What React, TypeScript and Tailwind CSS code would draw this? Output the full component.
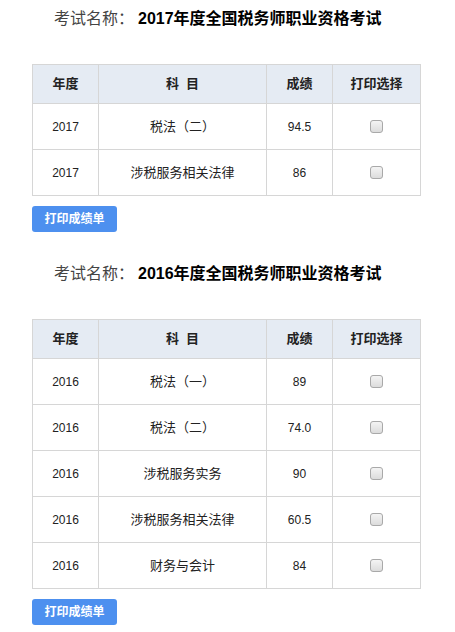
const exams = [
  {
    name: '2017年度全国税务师职业资格考试',
    rows: [
      { year: '2017', subject: '税法（二）', score: '94.5' },
      { year: '2017', subject: '涉税服务相关法律', score: '86' },
    ],
  },
  {
    name: '2016年度全国税务师职业资格考试',
    rows: [
      { year: '2016', subject: '税法（一）', score: '89' },
      { year: '2016', subject: '税法（二）', score: '74.0' },
      { year: '2016', subject: '涉税服务实务', score: '90' },
      { year: '2016', subject: '涉税服务相关法律', score: '60.5' },
      { year: '2016', subject: '财务与会计', score: '84' },
    ],
  },
]

function Checkbox() {
  return (
    <span className="inline-block w-[13px] h-[13px] rounded-[3px] border border-[#a9a9a9] bg-gradient-to-b from-[#f4f4f4] to-[#dcdcdc]"></span>
  )
}

function ExamBlock({ name, rows }: { name: string; rows: { year: string; subject: string; score: string }[] }) {
  return (
    <div className="pt-[7px] pb-[23px]">
      <h2 className="pl-[54px] h-[24px] leading-[24px] text-[16px] whitespace-nowrap">
        <span className="text-[#444]">考试名称：</span>
        <span className="ml-[4px] font-bold text-black">{name}</span>
      </h2>
      <table className="mt-[33px] ml-[32px] w-[388px] border-collapse table-fixed text-[12px] text-[#222]">
        <colgroup>
          <col className="w-[66px]" />
          <col className="w-[168px]" />
          <col className="w-[66px]" />
          <col className="w-[88px]" />
        </colgroup>
        <thead>
          <tr className="bg-[#e5ebf3] h-[39px] text-[13px] font-bold">
            <th className="border border-[#d6d6d6]">年度</th>
            <th className="border border-[#d6d6d6]">科&nbsp;&nbsp;目</th>
            <th className="border border-[#d6d6d6]">成绩</th>
            <th className="border border-[#d6d6d6]">打印选择</th>
          </tr>
        </thead>
        <tbody>
          {rows.map((r, i) => (
            <tr key={i} className="h-[46px] text-center">
              <td className="border border-[#d6d6d6]">{r.year}</td>
              <td className="border border-[#d6d6d6] text-[13px]">{r.subject}</td>
              <td className="border border-[#d6d6d6]">{r.score}</td>
              <td className="border border-[#d6d6d6] pt-[4px]">
                <Checkbox />
              </td>
            </tr>
          ))}
        </tbody>
      </table>
      <button className="block mt-[10px] ml-[32px] w-[85px] h-[26px] rounded-[3px] bg-[#4d90ef] text-white text-[12px] font-bold">
        打印成绩单
      </button>
    </div>
  )
}

export default function App() {
  return (
    <div className="w-[455px] min-h-[632px] bg-white font-['Liberation_Sans','Noto_Sans_CJK_SC',sans-serif]">
      {exams.map((e, i) => (
        <ExamBlock key={i} name={e.name} rows={e.rows} />
      ))}
    </div>
  )
}
